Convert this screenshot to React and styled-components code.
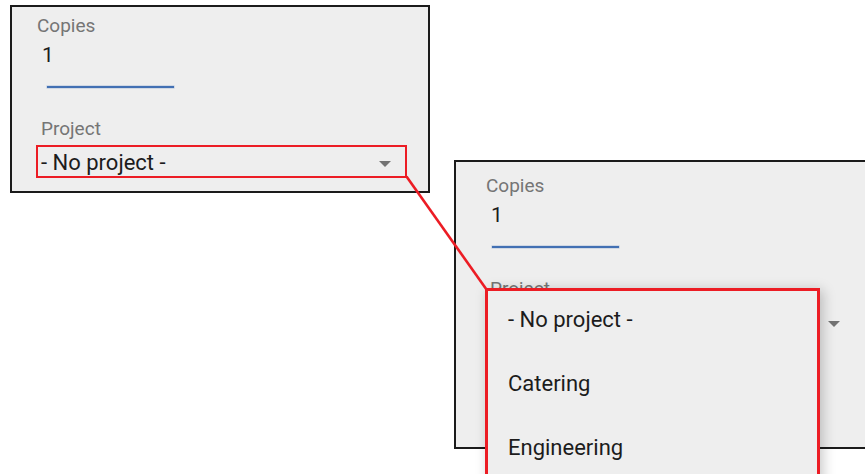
import React from "react";
import styled, { createGlobalStyle } from "styled-components";

const Global = createGlobalStyle`
  html, body { margin: 0; padding: 0; background: #ffffff; }
  body { font-family: Roboto, "Noto Sans", "Liberation Sans", sans-serif; }
  * { box-sizing: border-box; }
`;

const Canvas = styled.div`
  position: relative;
  width: 865px;
  height: 474px;
  overflow: hidden;
  background: #ffffff;
`;

const Panel = styled.div`
  position: absolute;
  left: ${(p) => p.$x}px;
  top: ${(p) => p.$y}px;
  width: 420px;
  height: ${(p) => p.$h}px;
  background: #eeeeee;
  border: 2px solid #1b1b1b;
  padding: ${(p) => p.$pt}px 0 0 ${(p) => p.$pl}px;
  display: flex;
  flex-direction: column;
  align-items: flex-start;
`;

const Label = styled.div`
  font-size: 19px;
  line-height: 22px;
  color: #757575;
  margin-left: ${(p) => p.$indent || 0}px;
  margin-top: ${(p) => p.$gap || 0}px;
`;

const Value = styled.div`
  font-size: 21px;
  line-height: 26px;
  color: #1c1c1c;
  margin: 5px 0 0 5px;
`;

const Underline = styled.div`
  width: 127px;
  height: 2px;
  margin: 18px 0 0 ${(p) => p.$indent}px;
  background: #4270b3;
  box-shadow: 0 0 0 0.5px rgba(66, 112, 179, 0.35);
`;

const SelectRow = styled.div`
  display: flex;
  align-items: center;
  width: 371px;
  margin: 5px 0 0 -1px;
  padding: 3px 14px 0 3px;
  border: 2px solid ${(p) => (p.$highlight ? "#ec1c24" : "transparent")};
`;

const SelectText = styled.span`
  flex: 1;
  font-size: 22px;
  line-height: 26px;
  color: #1c1c1c;
`;

const Caret = styled.span`
  width: 0;
  height: 0;
  margin-top: 1px;
  border-left: 6.5px solid transparent;
  border-right: 6.5px solid transparent;
  border-top: 6.5px solid #737373;
`;

const Menu = styled.div`
  position: absolute;
  left: 29px;
  top: 126px;
  width: 335px;
  background: #eeeeee;
  border: 3px solid #ec1c24;
  box-shadow: 3px 2px 12px rgba(0, 0, 0, 0.22);
  display: flex;
  flex-direction: column;
`;

const MenuItem = styled.div`
  height: 64px;
  padding: 0 0 7px 20px;
  display: flex;
  align-items: center;
  font-size: 22px;
  line-height: 26px;
  color: #1c1c1c;
`;

const Connector = styled.svg`
  position: absolute;
  left: 0;
  top: 0;
  width: 865px;
  height: 474px;
  pointer-events: none;
`;

function FormFields({ highlight, underlineIndent }) {
  return (
    <>
      <Label>Copies</Label>
      <Value>1</Value>
      <Underline $indent={underlineIndent} />
      <Label $indent={4} $gap={30}>Project</Label>
      <SelectRow $highlight={highlight}>
        <SelectText>- No project -</SelectText>
        <Caret />
      </SelectRow>
    </>
  );
}

export default function App() {
  const items = ["- No project -", "Catering", "Engineering"];
  return (
    <>
      <Global />
      <Canvas>
        <Panel $x={10} $y={5} $h={188} $pt={8} $pl={25}>
          <FormFields highlight underlineIndent={10} />
        </Panel>
        <Panel $x={454} $y={160} $h={289} $pt={13} $pl={30}>
          <FormFields underlineIndent={6} />
          <Menu>
            {items.map((it) => (
              <MenuItem key={it}>{it}</MenuItem>
            ))}
          </Menu>
        </Panel>
        <Connector viewBox="0 0 865 474">
          <line x1="406.5" y1="176.5" x2="486.5" y2="289.5" stroke="#ec1c24" strokeWidth="2.6" />
        </Connector>
      </Canvas>
    </>
  );
}
